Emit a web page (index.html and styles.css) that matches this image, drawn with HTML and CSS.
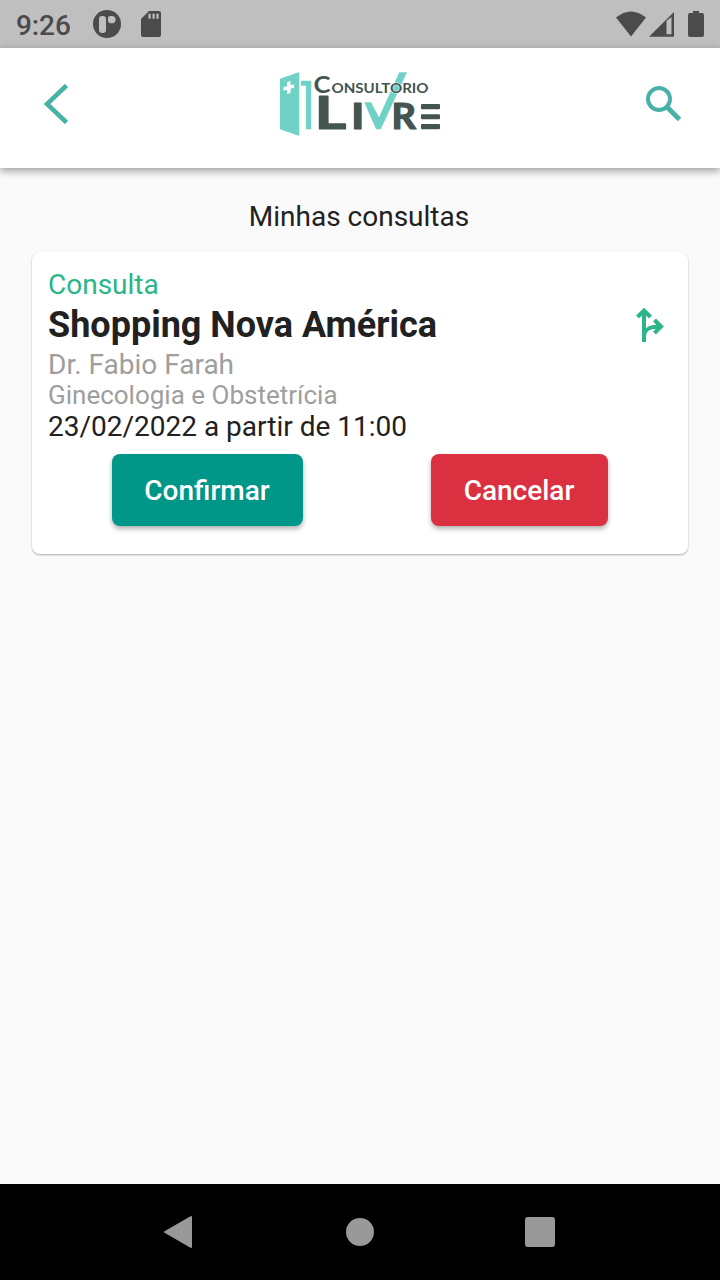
FILE: index.html
```html
<!DOCTYPE html>
<html lang="pt-BR">
<head>
<meta charset="utf-8">
<title>Minhas consultas</title>
<link rel="stylesheet" href="styles.css">
</head>
<body>
<div class="screen">
  <div class="status">
    <span class="clock">9:26</span>
    <svg class="app-icon" width="28" height="28" viewBox="0 0 28 28"><circle cx="14" cy="14" r="14" fill="#4b4b4b"/><rect x="6" y="6" width="7" height="17" rx="3" fill="#bfbfbf"/><path d="M17 6h2a3.600 3.600 0 0 1 0 7.200h-1a3 3 0 0 1-3-3V8a2 2 0 0 1 2-2z" fill="#bfbfbf"/></svg>
    <svg class="sd-icon" width="20" height="26" viewBox="0 0 20 26"><path d="M8 0h10a2 2 0 0 1 2 2v22a2 2 0 0 1-2 2H2a2 2 0 0 1-2-2V8z" fill="#4b4b4b"/><path d="M7.500 2.700h2.200v5H7.500zM11.500 2.700h2.200v5h-2.200zM15.400 2.700h2.200v5h-2.200z" fill="#bfbfbf"/></svg>
    <svg class="signals" width="90" height="28" viewBox="0 0 90 28"><g fill="#4b4b4b"><path d="M1 7.500Q16-4.500 31 7.500L16 26.500z"/><path fill-rule="evenodd" d="M59 2v24.700H34zM51.500 11v13.200h5V7z"/><path d="M78 1h6v2h3q2 0 2 2v20q0 2-2 2H75q-2 0-2-2V5q0-2 2-2h3z"/></g></svg>
  </div>
  <header class="appbar">
    <svg width="40" height="44" viewBox="0 0 40 44" fill="none" stroke="#48b2a9" stroke-width="4.500"><path d="M30.500 3.500 11 22l19.500 18.500"/></svg>
    <svg class="logo" width="160" height="68" viewBox="0 0 160 68" role="img" aria-label="Consultório Livre">
      <g fill="#70d2c6"><path d="M0 8.700 19.300 2v64L0 59.300zM21 10.700h10.300v48.600H26V15.700h-5z"/><path d="M84.300 32.300H91l8 15L119.300 2.300h7.700L100.800 59.300H96z"/></g>
      <path d="M7 12.200 10.500 11v4.200l3.600-1v3.500l-3.600 1v4.200L7 24v-4.200l-3.600 1v-3.500l3.600-1z" fill="#fff"/>
      <g class="logo-text">
        <text x="33.500" y="23" font-size="23" textLength="17" lengthAdjust="spacingAndGlyphs">C</text>
        <text class="halo" x="51.500" y="22.500" font-size="13" textLength="97" lengthAdjust="spacingAndGlyphs">ONSULTORIO</text>
        <text class="heavy" x="34.800" y="59.200" font-size="45" textLength="31.500" lengthAdjust="spacingAndGlyphs">L</text>
        <text class="heavy" x="71" y="59.200" font-size="36" textLength="13.500" lengthAdjust="spacingAndGlyphs">I</text>
        <text class="heavy" x="111.500" y="59.200" font-size="35.500" textLength="24.500" lengthAdjust="spacingAndGlyphs">R</text>
      </g>
      <g fill="#445450"><rect x="141" y="34" width="19" height="5.300" rx="1"/><rect x="141" y="44.300" width="19" height="5" rx="1"/><rect x="141" y="54" width="19" height="5.300" rx="1"/></g>
    </svg>
    <svg width="40" height="44" viewBox="0 0 40 44" fill="none" stroke="#48b2a9" stroke-width="4"><circle cx="17" cy="17" r="11"/><path d="m25 25 12.500 12.500" stroke-width="5"/></svg>
  </header>
  <main>
    <h1>Minhas consultas</h1>
    <section class="card">
      <p class="kind">Consulta</p>
      <div class="place-row">
        <h2>Shopping Nova América</h2>
        <svg width="30" height="38" viewBox="0 0 30 38" fill="none" stroke="#2bb588" stroke-width="4"><path d="M9 36V5M2.500 11 9 4.500l6.500 6.500M9 31c0-7 4-10.500 16-10.500M19.500 14l6.500 6.500-6.500 6.500"/></svg>
      </div>
      <p class="doctor">Dr. Fabio Farah</p>
      <p class="specialty">Ginecologia e Obstetrícia</p>
      <p class="date">23/02/2022 a partir de 11:00</p>
      <div class="actions">
        <button class="confirm">Confirmar</button>
        <button class="cancel">Cancelar</button>
      </div>
    </section>
  </main>
  <nav class="navbar">
    <svg width="30" height="34" viewBox="0 0 30 34"><path d="M2 17 28 2v30z" fill="#999" stroke="#999" stroke-width="2" stroke-linejoin="round"/></svg>
    <span class="home"></span>
    <span class="recents"></span>
  </nav>
</div>
</body>
</html>
```
FILE: styles.css
```css
* { box-sizing: border-box; }
body { margin: 0; font-family: Roboto, sans-serif; color: #212121; background: #fafafa; }
h1, h2, p { margin: 0; font-weight: 400; white-space: nowrap; }
svg { display: block; flex: none; }
.screen { width: 720px; height: 1280px; display: flex; flex-direction: column; }
.status { height: 48px; flex: none; background: #bfbfbf; display: flex; align-items: center; padding: 0 15px 0 16px; }
.clock { width: 77px; font-size: 28px; font-weight: 500; letter-spacing: -0.1px; color: #4b4b4b; line-height: 33px; padding-top: 3px; }
.sd-icon { margin-left: 20px; }
.signals { margin-left: auto; }
.appbar { height: 120px; flex: none; display: flex; align-items: center; justify-content: space-between; padding: 0 38px 8px 36px; background: #fff; box-shadow: 0 3px 8px rgba(0,0,0,.38); }
.logo { margin-left: 2px; overflow: visible; }
.logo-text { font-family: Lato, sans-serif; font-weight: 700; fill: #445450; }
.halo { stroke: #fff; stroke-width: 1px; paint-order: stroke; }
.heavy { stroke: #445450; stroke-width: 1.2px; stroke-linejoin: round; }
main { flex: 1; padding: 32px; }
h1 { font-size: 28px; line-height: 33px; text-align: center; padding-right: 2px; }
.card { margin-top: 19px; height: 302px; padding: 16px; background: #fff; border-radius: 8px; box-shadow: 0 1px 2px rgba(0,0,0,.32); }
.kind { font-size: 28px; line-height: 33px; color: #2bb588; }
.place-row { height: 47px; display: flex; align-items: center; justify-content: space-between; padding-right: 7px; }
h2 { font-size: 36px; font-weight: 700; line-height: 42px; padding-top: 1px; }
.doctor, .specialty { color: #9e9e9e; }
.doctor { font-size: 28px; line-height: 33px; }
.specialty { font-size: 26px; line-height: 29px; }
.date { font-size: 28px; line-height: 33px; }
.actions { display: flex; justify-content: space-between; padding: 11px 64px 0; }
button { height: 72px; padding: 0 1px 0 0; border: 0; border-radius: 8px; color: #fff; font: 500 28px Roboto, sans-serif; box-shadow: 0 3px 5px rgba(0,0,0,.3); }
.confirm { width: 191px; background: #009688; }
.cancel { width: 177px; background: #db303f; }
.navbar { height: 96px; flex: none; background: #000; display: flex; align-items: center; justify-content: space-between; padding: 0 165px 0 163px; }
.home { width: 28px; height: 28px; margin-left: 2px; border-radius: 50%; background: #999; }
.recents { width: 30px; height: 30px; border-radius: 3px; background: #999; }
```
